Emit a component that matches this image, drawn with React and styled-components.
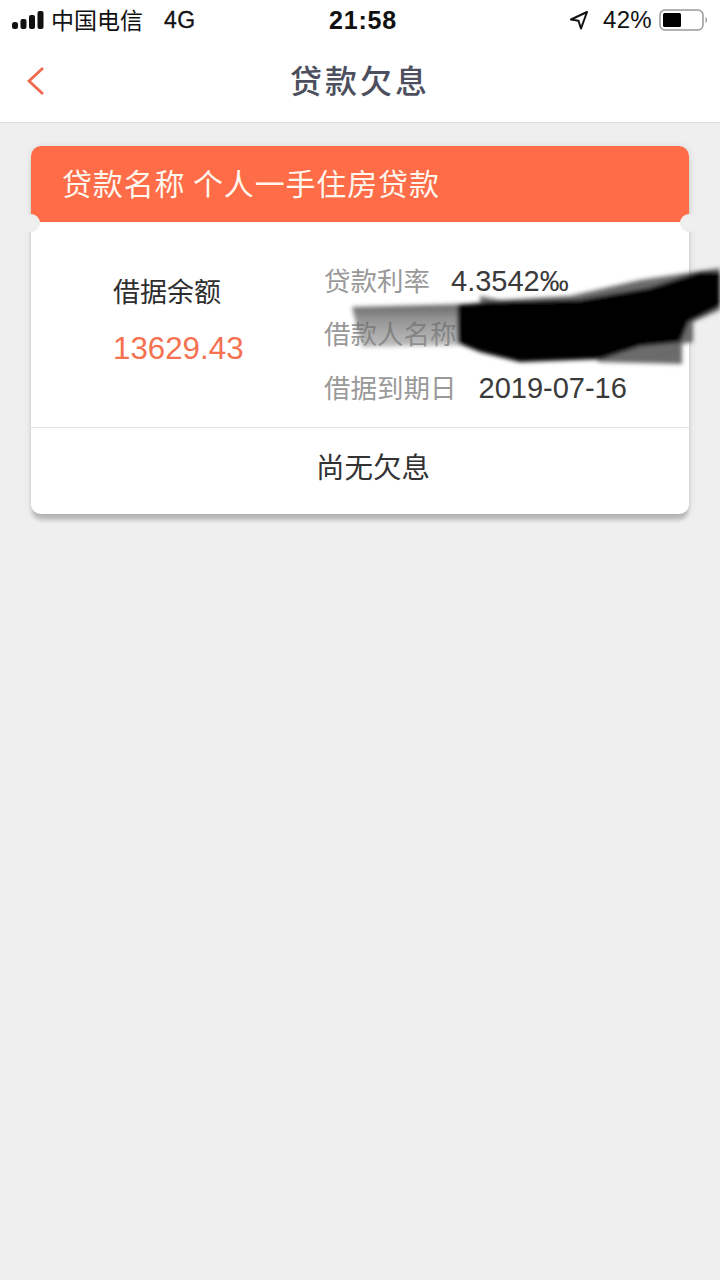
import React from 'react'
import styled, { createGlobalStyle } from 'styled-components'

const cjk = `"Noto Sans CJK SC", "Liberation Sans", sans-serif`

const GlobalStyle = createGlobalStyle`
  html, body { margin: 0; padding: 0; background: #efefef; }
  body { font-family: ${cjk}; }
`
const Page = styled.div`
  width: 720px;
  height: 1280px;
  background: #efefef;
  position: relative;
  overflow: hidden;
`
const Top = styled.header`
  background: #fff;
  height: 122px;
  border-bottom: 1px solid #dcdcdc;
`
const StatusBar = styled.div`
  height: 40px;
  padding: 0 11px 0 12px;
  display: grid;
  grid-template-columns: 1fr auto 1fr;
  align-items: center;
  color: #111;
  font-size: 23px;
`
const StatusLeft = styled.div`
  display: flex;
  align-items: center;
`
const StatusRight = styled.div`
  display: flex;
  align-items: center;
  justify-content: flex-end;
`
const Carrier = styled.span`
  margin-left: 7px;
  line-height: 38px;
  padding-bottom: 2px;
`
const Network = styled.span`
  margin-left: 21px;
  font-family: "Liberation Sans", sans-serif;
  font-size: 23px;
  letter-spacing: 0.4px;
  -webkit-text-stroke: 0.3px #111;
`
const Clock = styled.span`
  font-family: "Liberation Sans", sans-serif;
  font-weight: 700;
  font-size: 25px;
  letter-spacing: 0.8px;
  margin-left: 5px;
`
const Percent = styled.span`
  font-family: "Liberation Sans", sans-serif;
  font-size: 24px;
  letter-spacing: 0.3px;
  margin: 0 7px 0 14px;
`
const NavBar = styled.div`
  height: 82px;
  position: relative;
  display: flex;
  align-items: center;
  justify-content: center;
`
const BackIcon = styled.svg`
  position: absolute;
  left: 26px;
  top: 26px;
`
const Title = styled.h1`
  margin: 0 0 4px;
  font-size: 32px;
  font-weight: 500;
  color: #4d4f5e;
  letter-spacing: 3px;
`
const Content = styled.main`
  padding: 23px 31px 0 31px;
`
const Card = styled.section`
  position: relative;
  border-radius: 10px;
  box-shadow: 0 7px 4px -1px rgba(0, 0, 0, 0.22), 3px 0 7px rgba(0, 0, 0, 0.05), -2px 0 6px rgba(0, 0, 0, 0.04);
`
const CardHeader = styled.div`
  height: 76px;
  background: #ff6c48;
  border-radius: 10px 10px 0 0;
  color: #fff6ee;
  font-size: 30px;
  line-height: 72px;
  padding-left: 31px;
  letter-spacing: 0.85px;
`
const Notch = styled.span`
  position: absolute;
  top: 68px;
  ${p => (p.$right ? 'right: -9px;' : 'left: -9px;')}
  width: 18px;
  height: 18px;
  border-radius: 50%;
  background: #efefef;
`
const CardBody = styled.div`
  background: #fff;
  border-radius: 0 0 10px 10px;
`
const Summary = styled.div`
  height: 205px;
  display: flex;
  border-bottom: 1px solid #e2e2e2;
`
const Balance = styled.div`
  width: 293px;
  padding-left: 82px;
  box-sizing: border-box;
`
const BalanceLabel = styled.div`
  margin-top: 49px;
  font-size: 27px;
  line-height: 40px;
  color: #2e2e2e;
`
const BalanceValue = styled.div`
  margin-top: 18px;
  font-family: "Liberation Sans", sans-serif;
  font-size: 31.3px;
  line-height: 40px;
  color: #f5714f;
`
const Details = styled.div`
  padding-top: 39px;
  display: flex;
  flex-direction: column;
  gap: 13.5px;
`
const DetailRow = styled.div`
  display: flex;
  align-items: center;
  height: 40px;
  font-size: 26.5px;
`
const DetailLabel = styled.span`
  color: #999;
  padding-bottom: 4px;
  margin-right: ${p => p.$gap}px;
`
const DetailValue = styled.span`
  font-family: "Liberation Sans", sans-serif;
  font-size: 29px;
  color: #3a3a3a;
`
const Footer = styled.div`
  height: 86px;
  display: flex;
  align-items: center;
  justify-content: center;
  font-size: 28.5px;
  color: #333;
  padding: 0 0 12px 26px;
  box-sizing: border-box;
`
const Scribble = styled.svg`
  position: absolute;
  left: 0;
  top: 0;
  pointer-events: none;
`

const SignalIcon = () => (
  <svg width="32" height="20" viewBox="0 0 32 20">
    <rect x="0" y="12" width="6" height="7" rx="2.5" fill="#111" />
    <rect x="8.5" y="9" width="6" height="10" rx="2" fill="#111" />
    <rect x="17" y="5" width="6" height="14" rx="2" fill="#111" />
    <rect x="25.5" y="1" width="6" height="18" rx="2" fill="#111" />
  </svg>
)

const LocationIcon = () => (
  <svg width="20" height="20" viewBox="0 0 20 20">
    <path d="M18 2 L2 9.5 L9.5 10.8 L12 18.5 Z" fill="none" stroke="#111" strokeWidth="2" strokeLinejoin="round" />
  </svg>
)

const BatteryIcon = () => (
  <svg width="50" height="24" viewBox="0 0 50 24">
    <rect x="1" y="2" width="43" height="20" rx="5" fill="none" stroke="#999" strokeWidth="1.5" />
    <rect x="4" y="5" width="18" height="14" rx="1.5" fill="#000" />
    <path d="M46.5 9 C48.5 10 48.5 14 46.5 15 Z" fill="#999" />
  </svg>
)

const App = () => {
  return (
    <Page>
      <GlobalStyle />
      <Top>
        <StatusBar>
          <StatusLeft>
            <SignalIcon />
            <Carrier>中国电信</Carrier>
            <Network>4G</Network>
          </StatusLeft>
          <Clock>21:58</Clock>
          <StatusRight>
            <LocationIcon />
            <Percent>42%</Percent>
            <BatteryIcon />
          </StatusRight>
        </StatusBar>
        <NavBar>
          <BackIcon width="20" height="30" viewBox="0 0 20 30">
            <path d="M17 2 L3 15 L17 28" fill="none" stroke="#ef6a4c" strokeWidth="2.8" />
          </BackIcon>
          <Title>贷款欠息</Title>
        </NavBar>
      </Top>
      <Content>
        <Card>
          <CardHeader>贷款名称 个人一手住房贷款</CardHeader>
          <Notch />
          <Notch $right />
          <CardBody>
            <Summary>
              <Balance>
                <BalanceLabel>借据余额</BalanceLabel>
                <BalanceValue>13629.43</BalanceValue>
              </Balance>
              <Details>
                <DetailRow>
                  <DetailLabel $gap={21}>贷款利率</DetailLabel>
                  <DetailValue>4.3542‰</DetailValue>
                </DetailRow>
                <DetailRow>
                  <DetailLabel $gap={0}>借款人名称</DetailLabel>
                </DetailRow>
                <DetailRow>
                  <DetailLabel $gap={22}>借据到期日</DetailLabel>
                  <DetailValue>2019-07-16</DetailValue>
                </DetailRow>
              </Details>
            </Summary>
            <Footer>尚无欠息</Footer>
          </CardBody>
        </Card>
      </Content>
      <Scribble width="720" height="1280" viewBox="0 0 720 1280">
        <defs>
          <filter id="soft"><feGaussianBlur stdDeviation="2" /></filter>
          <linearGradient id="band" x1="0" y1="0" x2="0" y2="1">
            <stop offset="0" stopColor="#4a4a4a" stopOpacity="0.85" />
            <stop offset="0.35" stopColor="#666" stopOpacity="0.7" />
            <stop offset="1" stopColor="#888" stopOpacity="0.55" />
          </linearGradient>
        </defs>
        <g filter="url(#soft)">
          <path d="M352 307 L470 304 L470 345 L362 347 Z" fill="url(#band)" />
          <path d="M480 296 L500 300 L570 296 L640 280 L720 268 L720 310 L693 322 L693 342 L682 344 L682 364 L600 362 L560 340 L480 320 Z" fill="#555" opacity="0.88" />
          <path d="M458 305 L490 302 L580 300 L650 288 L700 272 L720 272 L720 306 L688 322 L680 342 L640 346 L600 359 L520 362 L480 352 L458 343 Z" fill="#000" />
        </g>
      </Scribble>
    </Page>
  )
}

export default App
